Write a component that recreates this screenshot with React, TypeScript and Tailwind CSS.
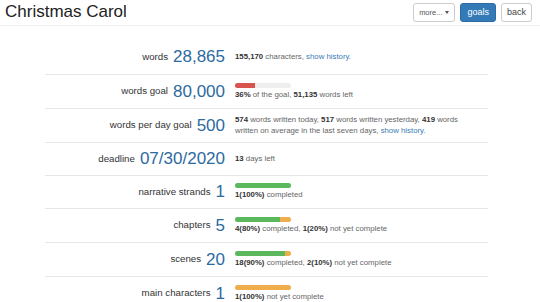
import React from "react";

type Seg = { pct: number; color: string };
type Row = {
  label: string;
  value: string;
  h: string;
  bar?: Seg[];
  text: React.ReactNode;
};

const B = ({ children }: { children: React.ReactNode }) => (
  <span className="font-bold text-[#333]">{children}</span>
);
const L = ({ children }: { children: React.ReactNode }) => (
  <a className="text-[#3b7bb5]">{children}</a>
);

const rows: Row[] = [
  {
    label: "words",
    value: "28,865",
    h: "h-[34px]",
    text: (
      <>
        <B>155,170</B> characters, <L>show history.</L>
      </>
    ),
  },
  {
    label: "words goal",
    value: "80,000",
    h: "h-[34px]",
    bar: [{ pct: 36, color: "#d9534f" }],
    text: (
      <>
        <B>36%</B> of the goal, <B>51,135</B> words left
      </>
    ),
  },
  {
    label: "words per day goal",
    value: "500",
    h: "h-[34px]",
    text: (
      <>
        <B>574</B> words written today, <B>517</B> words written yesterday, <B>419</B> words written on
        average in the last seven days, <L>show history.</L>
      </>
    ),
  },
  {
    label: "deadline",
    value: "07/30/2020",
    h: "h-[33px]",
    text: (
      <>
        <B>13</B> days left
      </>
    ),
  },
  {
    label: "narrative strands",
    value: "1",
    h: "h-[33px]",
    bar: [{ pct: 100, color: "#5cb85c" }],
    text: (
      <>
        <B>1(100%)</B> completed
      </>
    ),
  },
  {
    label: "chapters",
    value: "5",
    h: "h-[34px]",
    bar: [
      { pct: 80, color: "#5cb85c" },
      { pct: 20, color: "#f0ad4e" },
    ],
    text: (
      <>
        <B>4(80%)</B> completed, <B>1(20%)</B> not yet complete
      </>
    ),
  },
  {
    label: "scenes",
    value: "20",
    h: "h-[34px]",
    bar: [
      { pct: 90, color: "#5cb85c" },
      { pct: 10, color: "#f0ad4e" },
    ],
    text: (
      <>
        <B>18(90%)</B> completed, <B>2(10%)</B> not yet complete
      </>
    ),
  },
  {
    label: "main characters",
    value: "1",
    h: "h-[34px]",
    bar: [{ pct: 100, color: "#f0ad4e" }],
    text: (
      <>
        <B>1(100%)</B> not yet complete
      </>
    ),
  },
];

export default function App() {
  return (
    <div
      className="w-[540px] h-[302px] overflow-hidden bg-white text-[#333]"
      style={{ fontFamily: '"Liberation Sans", Arial, sans-serif' }}
    >
      <div className="flex items-start justify-between h-[26px] border-b border-[#f0f0f0] pl-[5px] pr-[8px]">
        <h1 className="text-[17px] leading-[20px] pt-[2px] text-[#222] font-normal">Christmas Carol</h1>
        <div className="flex gap-[5px] pt-[3px]">
          <button className="h-[19px] px-[5px] flex items-center gap-[3px] border border-[#ccc] rounded-[3px] bg-white text-[7.5px] text-[#555]">
            more...
            <span className="inline-block w-0 h-0 border-t-[3px] border-t-[#555] border-x-[2.5px] border-x-transparent" />
          </button>
          <button className="h-[19px] px-[6px] flex items-center border border-[#2e6da4] rounded-[3px] bg-[#337ab7] text-[9px] text-white">
            goals
          </button>
          <button className="h-[19px] px-[5px] flex items-center border border-[#ccc] rounded-[3px] bg-white text-[9px] text-[#444]">
            back
          </button>
        </div>
      </div>

      <div className="mt-[14px] ml-[45px] w-[443px]">
        {rows.map((r, i) => (
          <div
            key={r.label}
            className={`flex items-center ${r.h} ${i > 0 ? "border-t border-[#e6e6e6]" : ""}`}
          >
            <div className="w-[180px] flex items-center justify-end gap-[5px] shrink-0">
              <span className="text-[9.7px] text-[#333]">{r.label}</span>
              <span className="text-[17px] leading-[20px] text-[#2d6a9f]">{r.value}</span>
            </div>
            <div className="ml-[10px] pr-[8px] flex-1 text-[7.8px] leading-[10.5px] text-[#666]">
              {r.bar && (
                <div className="w-[56px] h-[5px] rounded-[3px] bg-[#eeeeee] overflow-hidden flex mb-[2px]">
                  {r.bar.map((s, j) => (
                    <div key={j} className="h-full" style={{ width: `${s.pct}%`, background: s.color }} />
                  ))}
                </div>
              )}
              <div>{r.text}</div>
            </div>
          </div>
        ))}
      </div>
    </div>
  );
}
